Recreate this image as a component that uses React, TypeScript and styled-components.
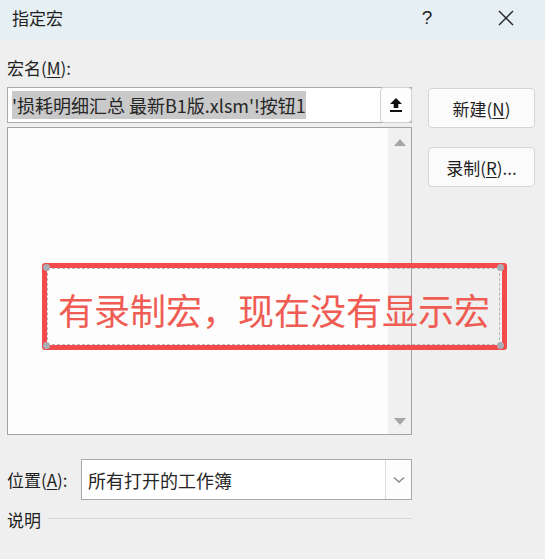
import React from "react";
import styled, { createGlobalStyle } from "styled-components";

const GlobalStyle = createGlobalStyle`
  html, body {
    margin: 0;
    padding: 0;
    background: #efefef;
  }
  * {
    box-sizing: border-box;
  }
`;

const FONT = `"Noto Sans CJK SC", "Liberation Sans", sans-serif`;

const Dialog = styled.div`
  position: relative;
  width: 545px;
  height: 559px;
  overflow: hidden;
  background: #efefef;
  font-family: ${FONT};
  font-size: 17px;
  color: #1f1f1f;
`;

const TitleBar = styled.div`
  height: 40px;
  display: flex;
  align-items: center;
  padding: 0 17px 0 12px;
  background: #e6f0f4;
`;

const Title = styled.div`
  flex: 1;
  font-size: 17px;
  line-height: 20px;
  padding-bottom: 4px;
`;

const TitleButton = styled.div<{ $w: number }>`
  width: ${(p) => p.$w}px;
  height: 40px;
  display: flex;
  align-items: center;
  justify-content: center;
  font-family: "Liberation Sans", sans-serif;
  font-size: 19px;
  color: #222;
  padding-bottom: 4px;
`;

const Content = styled.div`
  padding: 18px 10px 0 7px;
`;

const Label = styled.div`
  line-height: 20px;
  white-space: nowrap;
`;

const Key = styled.span`
  text-decoration: underline;
  text-underline-offset: 2px;
`;

const MainRow = styled.div`
  display: flex;
  gap: 16px;
  margin-top: 9px;
`;

const LeftCol = styled.div`
  width: 405px;
  display: flex;
  flex-direction: column;
  gap: 4px;
`;

const RightCol = styled.div`
  width: 107px;
  display: flex;
  flex-direction: column;
  gap: 19px;
  padding-top: 1px;
`;

const NameInput = styled.div`
  height: 36px;
  display: flex;
  align-items: stretch;
  background: #fff;
  border: 1px solid #aaaaaa;
  padding-left: 4px;
`;

const Selected = styled.div`
  flex: 1;
  display: flex;
  align-items: center;
`;

const Highlight = styled.span`
  background: #c9c9c9;
  line-height: 28px;
  font-size: 18px;
  color: #262626;
  white-space: nowrap;
`;

const UploadButton = styled.div`
  width: 32px;
  margin: -1px -1px -1px 0;
  display: flex;
  align-items: center;
  justify-content: center;
  background: #fdfdfd;
  border: 1px solid #d2d2d2;
  border-radius: 4px;
`;

const MacroList = styled.div`
  height: 308px;
  display: flex;
  background: #fdfdfd;
  border: 1px solid #a3a3a3;
`;

const ListBody = styled.div`
  flex: 1;
`;

const ScrollTrack = styled.div`
  width: 23px;
  background: #f0f0f0;
  display: flex;
  flex-direction: column;
  justify-content: space-between;
  align-items: center;
  padding: 11px 0 9px;
`;

const Arrow = styled.div<{ $down?: boolean }>`
  width: 0;
  height: 0;
  border-left: 6px solid transparent;
  border-right: 6px solid transparent;
  ${(p) =>
    p.$down
      ? "border-top: 7px solid #a6a6a6;"
      : "border-bottom: 7px solid #a6a6a6;"}
`;

const SideButton = styled.div`
  height: 40px;
  display: flex;
  align-items: center;
  justify-content: center;
  background: #fbfbfb;
  border: 1px solid #d4d4d4;
  border-radius: 4px;
  white-space: nowrap;
`;

const LocationRow = styled.div`
  display: flex;
  align-items: center;
  margin-top: 24px;
  width: 405px;
`;

const LocationLabel = styled(Label)`
  width: 74px;
`;

const Select = styled.div`
  flex: 1;
  height: 41px;
  display: flex;
  background: #fff;
  border: 1px solid #a9a9a9;
`;

const SelectValue = styled.div`
  flex: 1;
  display: flex;
  align-items: center;
  padding-left: 6px;
  font-size: 18px;
  color: #262626;
`;

const SelectToggle = styled.div`
  width: 26px;
  display: flex;
  align-items: center;
  justify-content: center;
  border-left: 1px solid #dcdcdc;
  background: #fdfdfd;
`;

const DescRow = styled.div`
  display: flex;
  align-items: center;
  width: 405px;
  margin-top: 10px;
`;

const Rule = styled.div`
  flex: 1;
  height: 1px;
  margin-left: 7px;
  margin-top: -4px;
  background: #d8d8d8;
`;

/* red callout drawn over the dialog */
const Callout = styled.div`
  position: absolute;
  left: 42px;
  top: 263px;
  width: 465px;
  height: 87px;
  border: 5px solid #f34b4b;
  border-radius: 3px;
`;

const ShapeFrame = styled.div`
  position: absolute;
  inset: 0 2px 0 0;
  border: 1px dashed #b8b8b8;
  display: flex;
  align-items: center;
  padding-left: 10px;
`;

const Handle = styled.div<{ $x: "l" | "r"; $y: "t" | "b" }>`
  position: absolute;
  width: 7px;
  height: 7px;
  border-radius: 50%;
  background: #a9aeb2;
  ${(p) => (p.$x === "l" ? "left: -5px;" : "right: -5px;")}
  ${(p) => (p.$y === "t" ? "top: -5px;" : "bottom: -5px;")}
`;

const CalloutText = styled.div`
  font-size: 36px;
  line-height: 40px;
  color: #ee5c53;
  white-space: nowrap;
  margin-top: 4px;
`;

const UploadIcon = () => (
  <svg width="14" height="16" viewBox="0 0 14 16">
    <path d="M7 1 L13 7 H9.3 V11 H4.7 V7 H1 Z" fill="#111" />
    <rect x="1" y="13" width="12" height="2" fill="#111" />
  </svg>
);

const Chevron = () => (
  <svg width="12" height="8" viewBox="0 0 12 8">
    <path d="M1 1.5 L6 6 L11 1.5" fill="none" stroke="#8a8a8a" strokeWidth="1.4" />
  </svg>
);

const CloseIcon = () => (
  <svg width="16" height="16" viewBox="0 0 16 16">
    <path d="M1 1 L15 15 M15 1 L1 15" stroke="#222" strokeWidth="1.4" />
  </svg>
);

export default function App() {
  return (
    <>
      <GlobalStyle />
      <Dialog>
        <TitleBar>
          <Title>指定宏</Title>
          <TitleButton $w={44}>?</TitleButton>
          <TitleButton $w={35} />
          <TitleButton $w={44}>
            <CloseIcon />
          </TitleButton>
        </TitleBar>
        <Content>
          <Label>
            宏名(<Key>M</Key>):
          </Label>
          <MainRow>
            <LeftCol>
              <NameInput>
                <Selected>
                  <Highlight>'损耗明细汇总 最新B1版.xlsm'!按钮1</Highlight>
                </Selected>
                <UploadButton>
                  <UploadIcon />
                </UploadButton>
              </NameInput>
              <MacroList>
                <ListBody />
                <ScrollTrack>
                  <Arrow />
                  <Arrow $down />
                </ScrollTrack>
              </MacroList>
            </LeftCol>
            <RightCol>
              <SideButton>
                新建(<Key>N</Key>)
              </SideButton>
              <SideButton>
                录制(<Key>R</Key>)...
              </SideButton>
            </RightCol>
          </MainRow>
          <LocationRow>
            <LocationLabel>
              位置(<Key>A</Key>):
            </LocationLabel>
            <Select>
              <SelectValue>所有打开的工作簿</SelectValue>
              <SelectToggle>
                <Chevron />
              </SelectToggle>
            </Select>
          </LocationRow>
          <DescRow>
            <Label>说明</Label>
            <Rule />
          </DescRow>
        </Content>
        <Callout>
          <ShapeFrame>
            <Handle $x="l" $y="t" />
            <Handle $x="r" $y="t" />
            <Handle $x="l" $y="b" />
            <Handle $x="r" $y="b" />
            <CalloutText>有录制宏，现在没有显示宏</CalloutText>
          </ShapeFrame>
        </Callout>
      </Dialog>
    </>
  );
}
